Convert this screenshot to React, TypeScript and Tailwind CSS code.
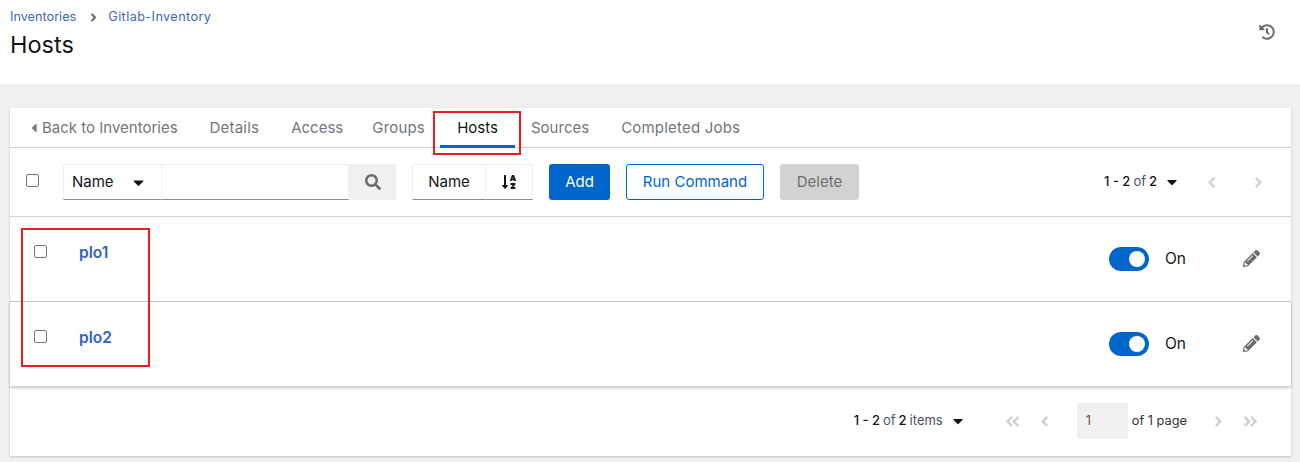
import {
  FaAngleDoubleLeft,
  FaAngleDoubleRight,
  FaAngleLeft,
  FaAngleRight,
  FaCaretDown,
  FaCaretLeft,
  FaHistory,
  FaPencilAlt,
  FaSearch,
  FaSortAlphaDown,
} from 'react-icons/fa'

function HostRow({ name, raised }: { name: string; raised?: boolean }) {
  return (
    <div
      className={`flex ${raised ? 'relative h-[85px] border-t border-[#c8c8c8] shadow-[0_2px_3px_rgba(0,0,0,0.22)]' : 'h-[84px]'}`}
    >
      <div className="flex h-[68px] w-[69px] shrink-0 items-center pl-[24px]">
        <span className="block h-[13px] w-[13px] rounded-[2px] border border-[#767676] bg-white" />
      </div>
      <div className="flex h-[72px] items-center text-[15.5px] font-semibold text-[#2f63c4]">{name}</div>
      <div className="ml-auto flex h-[84px] items-center pr-[31px]">
        <span className="flex h-[24px] w-[40px] items-center justify-end rounded-full bg-[#0066cc] pr-[4px]">
          <span className="h-[16px] w-[16px] rounded-full bg-white" />
        </span>
        <span className="ml-[16px] w-[22px] text-[15.5px] text-[#151515]">On</span>
        <FaPencilAlt className="mb-[2px] ml-[56px] text-[17px] text-[#6a6e73]" />
      </div>
    </div>
  )
}

export default function App() {
  return (
    <div className="relative h-[462px] w-[1300px] overflow-hidden bg-[#f0f0f0] font-['Inter','Liberation_Sans',sans-serif] text-[14px]">
      {/* Header */}
      <div className="flex h-[84px] justify-between bg-white pl-[10px] pr-[25px]">
        <div>
          <div className="flex h-[34px] items-center text-[12.7px] text-[#3a68c0]">
            <span>Inventories</span>
            <FaAngleRight className="ml-[11px] mr-[8px] text-[13px] text-[#6a6e73]" />
            <span className="tracking-[0.4px]">Gitlab-Inventory</span>
          </div>
          <h1 className="text-[23.5px] leading-[22px] text-[#151515]">Hosts</h1>
        </div>
        <FaHistory className="mt-[24px] text-[16px] text-[#6a6e73]" />
      </div>

      {/* Card */}
      <div className="ml-[10px] mt-[24px] h-[348px] w-[1281px] bg-white shadow-[0_1px_2px_rgba(0,0,0,0.2)]">
        {/* Tabs */}
        <div className="flex h-[40px] items-center border-b border-[#d2d2d2] pt-[1px] text-[15px] text-[#72767b]">
          <span className="ml-[17px] flex items-center">
            <FaCaretLeft className="mr-[1px] text-[14px]" />
            Back to Inventories
          </span>
          <span className="ml-[32px] tracking-[0.2px]">Details</span>
          <span className="ml-[32px]">Access</span>
          <span className="ml-[29px] tracking-[0.2px]">Groups</span>
          <span className="relative ml-[15px] flex h-[38px] w-[75px] items-center justify-center text-[#151515]">
            Hosts
            <span className="absolute -bottom-[1px] left-0 h-[3px] w-full bg-[#0066cc]" />
          </span>
          <span className="ml-[16px]">Sources</span>
          <span className="ml-[32px] tracking-[0.2px]">Completed Jobs</span>
        </div>

        {/* Toolbar */}
        <div className="flex h-[69px] items-center border-b border-[#d2d2d2] text-[15px]">
          <span className="mb-[3px] ml-[16px] h-[13px] w-[13px] rounded-[2px] border border-[#767676] bg-white" />
          <div className="ml-[24px] flex h-[36px] w-[99px] items-center justify-between border border-[#f0f0f0] border-b-[#8a8d90] pl-[8px] pr-[14px] text-[#151515]">
            Name
            <FaCaretDown className="text-[17px]" />
          </div>
          <div className="h-[36px] w-[187px] border-y border-r border-[#f0f0f0] border-b-[#8a8d90]" />
          <div className="flex h-[36px] w-[47px] items-center justify-center bg-[#f0f0f0] text-[#6a6e73]">
            <FaSearch className="text-[16px]" />
          </div>
          <div className="ml-[16px] flex h-[36px] w-[74px] items-center justify-center border border-[#f0f0f0] border-b-[#8a8d90] text-[#151515]">
            Name
          </div>
          <div className="flex h-[36px] w-[47px] items-center justify-center border-y border-r border-[#f0f0f0] border-b-[#8a8d90]">
            <FaSortAlphaDown className="mr-[1px] text-[16px] text-[#151515]" />
          </div>
          <button className="ml-[16px] h-[36px] w-[61px] rounded-[3px] bg-[#0066cc] text-white">Add</button>
          <button className="ml-[16px] h-[36px] w-[138px] rounded-[3px] border border-[#0066cc] text-[#0066cc]">
            Run Command
          </button>
          <button className="ml-[16px] h-[36px] w-[79px] rounded-[3px] bg-[#d2d2d2] text-[#6a6e73]">Delete</button>
          <div className="ml-auto flex items-center pr-[24px] text-[13px] text-[#151515]">
            <span className="font-medium">1 - 2</span>
            <span className="ml-[3px] text-[#44536b]">of</span>
            <span className="ml-[3px] font-medium">2</span>
            <FaCaretDown className="ml-[7px] text-[16px]" />
            <FaAngleLeft className="ml-[23px] text-[17px] text-[#d2d2d2]" />
            <FaAngleRight className="ml-[30px] text-[17px] text-[#d2d2d2]" />
          </div>
        </div>

        <HostRow name="plo1" />
        <HostRow name="plo2" raised />

        {/* Pagination */}
        <div className="flex h-[70px] items-center justify-end pr-[32px] text-[13px] text-[#151515]">
          <span className="font-medium">1 - 2</span>
          <span className="ml-[3px] text-[#44536b]">of</span>
          <span className="ml-[3px] font-medium">2</span>
          <span className="ml-[3px] text-[#44536b]">items</span>
          <FaCaretDown className="ml-[7px] text-[16px]" />
          <FaAngleDoubleLeft className="ml-[38px] text-[17px] text-[#d2d2d2]" />
          <FaAngleLeft className="ml-[15px] text-[17px] text-[#d2d2d2]" />
          <span className="ml-[24px] flex h-[36px] w-[51px] items-center bg-[#f0f0f0] pl-[9px] text-[#8b4a4a]">1</span>
          <span className="ml-[4px] text-[12.8px] text-[#333]">of 1 page</span>
          <FaAngleRight className="ml-[23px] text-[17px] text-[#d2d2d2]" />
          <FaAngleDoubleRight className="ml-[15px] text-[17px] text-[#d2d2d2]" />
        </div>
      </div>

      {/* Red annotation boxes */}
      <div className="absolute left-[433px] top-[111px] h-[44px] w-[88px] border-2 border-[#ed1c24]" />
      <div className="absolute left-[21px] top-[228px] h-[139px] w-[129px] border-2 border-[#ed1c24]" />
    </div>
  )
}
